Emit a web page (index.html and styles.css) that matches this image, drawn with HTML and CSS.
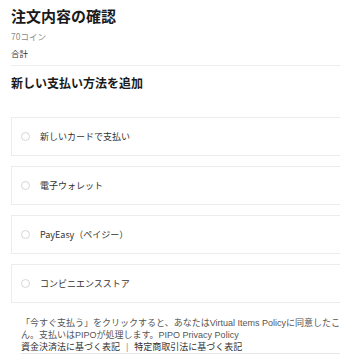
FILE: index.html
```html
<!DOCTYPE html>
<html lang="ja">
<head>
<meta charset="utf-8">
<link rel="stylesheet" href="styles.css">
</head>
<body>
<div class="page">
  <h1 class="title">注文内容の確認</h1>
  <div class="summary">
    <div class="item">70コイン</div>
    <div class="total">合計</div>
  </div>
  <h2 class="subtitle">新しい支払い方法を追加</h2>
  <ul class="methods">
    <li class="method"><span class="radio"></span><span class="label">新しいカードで支払い</span></li>
    <li class="method"><span class="radio"></span><span class="label">電子ウォレット</span></li>
    <li class="method"><span class="radio"></span><span class="label">PayEasy（ペイジー）</span></li>
    <li class="method"><span class="radio"></span><span class="label">コンビニエンスストア</span></li>
  </ul>
  <div class="footer">
    <p class="notice">「今すぐ支払う」をクリックすると、あなたはVirtual Items Policyに同意したこん。支払いはPIPOが処理します。PIPO Privacy Policy</p>
    <p class="links"><a>資金決済法に基づく表記</a><span class="sep">|</span><a>特定商取引法に基づく表記</a></p>
  </div>
</div>
</body>
</html>
```

FILE: styles.css
```css
html, body {
  margin: 0;
  padding: 0;
  overflow: hidden;
  background: #fff;
}
body {
  font-family: "Noto Sans CJK JP", "Noto Sans", sans-serif;
  color: #222;
}
.page {
  width: 336px;
  padding-left: 11px;
}
.title {
  margin: 6px 0 0;
  font-size: 15px;
  line-height: 20px;
  font-weight: 700;
  color: #1a1a1a;
}
.summary {
  padding-bottom: 6px;
  border-bottom: 1px solid #ededed;
}
.item {
  margin-top: 4px;
  font-size: 8.5px;
  line-height: 12px;
  color: #8c8c8c;
}
.total {
  margin-top: 5px;
  font-size: 8.5px;
  line-height: 12px;
  color: #333;
}
.subtitle {
  margin: 9px 0 0;
  font-size: 12px;
  line-height: 16px;
  font-weight: 700;
  color: #1a1a1a;
}
.methods {
  list-style: none;
  margin: 26px 0 0;
  padding: 0;
  display: flex;
  flex-direction: column;
  gap: 10px;
}
.method {
  height: 37px;
  border: 1px solid #ececec;
  display: flex;
  align-items: center;
  padding-left: 9px;
  gap: 10px;
}
.radio {
  width: 7px;
  height: 7px;
  border: 1px solid #d6d6d6;
  border-radius: 50%;
  flex: none;
}
.label {
  font-size: 9px;
  line-height: 12px;
  color: #333;
}
.footer {
  margin: 14px 0 0 10px;
  border-bottom: 1px solid #e6e6e6;
  width: 322px;
  font-family: "Liberation Sans", "Noto Sans CJK JP", sans-serif;
}
.footer p {
  margin: 0;
  font-size: 9px;
  line-height: 12px;
}
.notice {
  color: #555;
}
.links {
  color: #333;
}
.links a {
  color: #333;
  text-decoration: none;
}
.sep {
  margin: 0 6px;
  color: #999;
}
```
